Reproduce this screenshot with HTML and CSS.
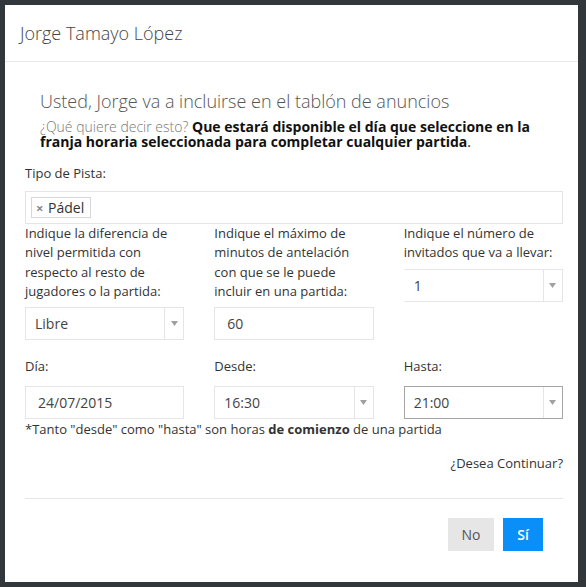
FILE: index.html
```html
<!DOCTYPE html>
<html>
<head>
<meta charset="utf-8">
<link rel="stylesheet" href="styles.css">
</head>
<body>
<div class="modal">
  <div class="modal-header">Jorge Tamayo López</div>
  <div class="modal-body">
    <div class="intro">
      <h3 class="intro-title">Usted, Jorge va a incluirse en el tablón de anuncios</h3>
      <p class="intro-text"><span class="muted">¿Qué quiere decir esto?</span> <b>Que estará disponible el día que seleccione en la franja horaria seleccionada para completar cualquier partida</b>.</p>
    </div>
    <div class="field-label">Tipo de Pista:</div>
    <div class="tag-box"><span class="tag"><span class="tag-x">×</span> Pádel</span></div>
    <div class="row">
      <div class="col">
        <div class="label">Indique la diferencia de nivel permitida con respecto al resto de jugadores o la partida:</div>
        <div class="select"><span class="value">Libre</span><span class="arrow"><svg width="7" height="5" viewBox="0 0 7 5"><path d="M0 0H7L3.5 5Z" fill="#a0a0a0"/></svg></span></div>
      </div>
      <div class="col">
        <div class="label">Indique el máximo de minutos de antelación con que se le puede incluir en una partida:</div>
        <div class="input"><span class="value value-input">60</span></div>
      </div>
      <div class="col">
        <div class="label">Indique el número de invitados que va a llevar:</div>
        <div class="select select-plain"><span class="value">1</span><span class="arrow"><svg width="7" height="5" viewBox="0 0 7 5"><path d="M0 0H7L3.5 5Z" fill="#a0a0a0"/></svg></span></div>
      </div>
    </div>
    <div class="row row-time">
      <div class="col">
        <div class="label">Día:</div>
        <div class="input"><span class="value value-input">24/07/2015</span></div>
      </div>
      <div class="col">
        <div class="label">Desde:</div>
        <div class="select"><span class="value">16:30</span><span class="arrow"><svg width="7" height="5" viewBox="0 0 7 5"><path d="M0 0H7L3.5 5Z" fill="#a0a0a0"/></svg></span></div>
      </div>
      <div class="col">
        <div class="label">Hasta:</div>
        <div class="select select-focus"><span class="value">21:00</span><span class="arrow"><svg width="7" height="5" viewBox="0 0 7 5"><path d="M0 0H7L3.5 5Z" fill="#a0a0a0"/></svg></span></div>
      </div>
    </div>
    <p class="note">*Tanto "desde" como "hasta" son horas <b>de comienzo</b> de una partida</p>
    <p class="continue">¿Desea Continuar?</p>
    <div class="divider"></div>
    <div class="actions">
      <button class="btn btn-no">No</button>
      <button class="btn btn-yes">Sí</button>
    </div>
  </div>
</div>
</body>
</html>
```
FILE: styles.css
```css
html, body {
  margin: 0;
  padding: 0;
  background: #32373c;
  height: 100%;
}
body {
  font-family: "Open Sans", "Liberation Sans", sans-serif;
  color: #333;
  padding: 5px 0 0 5px;
  box-sizing: border-box;
}
.modal {
  width: 573px;
  height: 577px;
  background: #fff;
  box-sizing: border-box;
}
.modal-header {
  padding: 15px 15px;
  font-size: 18px;
  line-height: 26px;
  font-weight: 300;
  color: #444;
  border-bottom: 1px solid #e8e8e8;
}
.modal-body {
  padding: 0 15px 0 20px;
}
.intro {
  padding: 25px 15px 0;
}
.intro-title {
  margin: 0;
  font-size: 18px;
  line-height: 28px;
  font-weight: 300;
  color: #555;
}
.intro-text {
  margin: 0;
  font-size: 14px;
  line-height: 14.5px;
  color: #222;
  padding-top: 5px;
}
.intro-text b { color: #111; }
.muted {
  font-weight: 300;
  color: #777;
}
.field-label {
  margin-top: 15px;
  font-size: 13px;
  line-height: 19px;
  color: #333;
}
.tag-box {
  margin-top: 8px;
  height: 33px;
  border: 1px solid #e5e5e5;
  box-sizing: border-box;
  padding: 4px 5px;
}
.tag {
  display: inline-block;
  border: 1px solid #d8d8d8;
  height: 21px;
  box-sizing: border-box;
  font-size: 14px;
  line-height: 19px;
  padding: 0 6px 0 4px;
  color: #333;
}
.tag-x {
  color: #888;
  font-weight: bold;
  font-size: 13px;
  margin-right: 1px;
}
.row {
  display: grid;
  grid-template-columns: 1fr 1fr 1fr;
  column-gap: 30px;
}
.label {
  font-size: 13px;
  line-height: 19.3px;
  color: #333;
}
.select, .input {
  margin-top: 6px;
  height: 33px;
  box-sizing: border-box;
  border: 1px solid #e5e5e5;
  display: flex;
  align-items: center;
  font-size: 14px;
  color: #444;
}
.value {
  flex: 1;
  padding-left: 9px;
}
.value-input {
  padding-left: 12px;
}
.arrow {
  width: 18px;
  align-self: stretch;
  border-left: 1px solid #e5e5e5;
  display: flex;
  align-items: center;
  justify-content: center;
}
.select-plain {
  border-left-color: transparent;
}
.select-focus {
  border-color: #a5a5a5;
}
.row-time {
  margin-top: 17px;
}
.row-time .select, .row-time .input {
  margin-top: 10px;
}
.note {
  margin: 1px 0 0;
  font-size: 13px;
  line-height: 19px;
  color: #333;
}
.continue {
  margin: 15px 0 0;
  text-align: right;
  font-size: 13px;
  line-height: 19px;
  color: #333;
}
.divider {
  margin-top: 25px;
  border-top: 1px solid #e5e5e5;
}
.actions {
  display: flex;
  justify-content: flex-end;
  gap: 9px;
  padding: 19px 20px 0 0;
}
.btn {
  height: 33px;
  border: 0;
  font-family: "Open Sans", "Liberation Sans", sans-serif;
  font-size: 14px;
  padding: 0 12px;
  cursor: pointer;
}
.btn-no {
  background: #e6e6e6;
  color: #555;
  width: 46px;
}
.btn-yes {
  background: #0a8ef8;
  color: #fff;
  font-weight: 600;
  width: 40px;
}
```
